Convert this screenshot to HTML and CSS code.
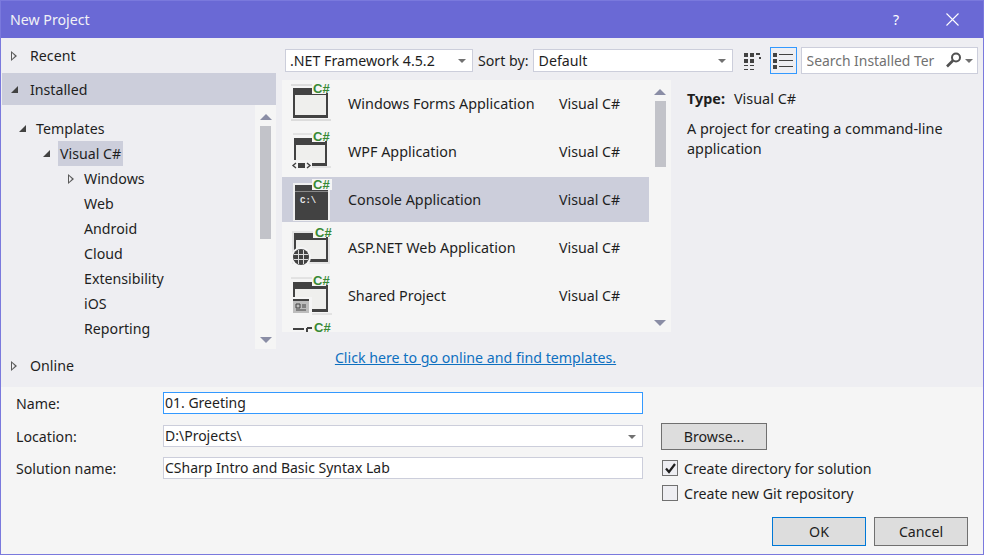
FILE: index.html
```html
<!DOCTYPE html>
<html lang="en">
  <head>
    <meta charset="UTF-8" />
    <title>New Project</title>
    <link rel="stylesheet" href="styles.css">
  </head>
  <body>
    <div class="dialog">
      <div class="titlebar">
        <span class="title">New Project</span>
        <span class="help">?</span>
        <svg class="close" width="13" height="13" viewBox="0 0 13 13"><path d="M0.5 0.5 L12.5 12.5 M12.5 0.5 L0.5 12.5" stroke="#fff" stroke-width="1.1" fill="none"/></svg>
      </div>

      <div class="main">
        <div class="sidebar">
          <div class="top-node node-recent"><span class="arrow-open"></span>Recent</div>
          <div class="top-node node-installed"><span class="arrow-down"></span>Installed</div>
          <div class="tree-wrap">
            <ul class="tree">
              <li class="lvl1"><span class="arrow-down"></span>Templates</li>
              <li class="lvl2"><span class="arrow-down"></span><span class="picked">Visual C#</span></li>
              <li class="lvl3"><span class="arrow-open"></span>Windows</li>
              <li class="lvl3">Web</li>
              <li class="lvl3">Android</li>
              <li class="lvl3">Cloud</li>
              <li class="lvl3">Extensibility</li>
              <li class="lvl3">iOS</li>
              <li class="lvl3">Reporting</li>
            </ul>
            <div class="scrollbar tree-scroll">
              <span class="sb-up"></span>
              <span class="sb-thumb"></span>
              <span class="sb-down"></span>
            </div>
          </div>
          <div class="top-node node-online"><span class="arrow-open"></span>Online</div>
        </div>

        <div class="center">
          <div class="toolbar">
            <div class="combo framework">.NET Framework 4.5.2<span class="caret"></span></div>
            <span class="sort-label">Sort by:</span>
            <div class="combo sort">Default<span class="caret"></span></div>
            <svg class="grid-view" width="18" height="18" viewBox="0 0 18 18" fill="#424242">
              <rect x="0" y="1" width="4" height="4"/><rect x="6" y="1" width="4" height="4"/><rect x="12" y="1" width="4" height="2"/>
              <rect x="0" y="7" width="4" height="4"/><rect x="6" y="7" width="4" height="4"/><rect x="15" y="5" width="2" height="2"/>
              <rect x="0" y="13" width="4" height="1"/><rect x="6" y="13" width="4" height="1"/>
              <rect x="0" y="17" width="4" height="1"/><rect x="6" y="17" width="4" height="1"/>
            </svg>
            <div class="list-view">
              <svg width="20" height="18" viewBox="0 0 20 18" fill="#424242">
                <rect x="0" y="1" width="4" height="4"/><rect x="6" y="2" width="14" height="1"/>
                <rect x="0" y="7" width="4" height="4"/><rect x="6" y="8" width="14" height="1"/>
                <rect x="0" y="13" width="4" height="4"/><rect x="6" y="14" width="14" height="1"/>
              </svg>
            </div>
            <div class="search">
              <span class="search-text">Search Installed Ter</span>
              <svg width="17" height="16" viewBox="0 0 17 16"><circle cx="11" cy="5.5" r="4" fill="none" stroke="#515151" stroke-width="2"/><path d="M8 8.5 L2 14.5" stroke="#515151" stroke-width="2.6"/></svg>
              <span class="caret"></span>
            </div>
          </div>

          <div class="content">
            <div class="list-wrap">
              <div class="list">
                <div class="row">
                  <svg class="tpl" width="44" height="45" viewBox="0 0 44 45">
                    <path d="M3 4 H24 M3 39 H43" stroke="#c4c4c4"/>
                    <rect x="5" y="7" width="35" height="30" fill="#424242"/>
                    <rect x="7" y="14" width="31" height="20" fill="#efefed"/>
                    <rect x="24" y="2" width="20" height="11" fill="#f5f5f5"/>
                    <rect x="38" y="12" width="2" height="3" fill="#424242"/>
                    <text class="cs" x="25" y="12">C#</text>
                  </svg>
                  <span class="row-name">Windows Forms Application</span><span class="row-lang">Visual C#</span>
                </div>
                <div class="row">
                  <svg class="tpl" width="44" height="45" viewBox="0 0 44 45">
                    <path d="M5 5 H24 M24 38 H43" stroke="#d0d0d0"/>
                    <rect x="6" y="9" width="33" height="28" fill="#424242"/>
                    <rect x="8" y="16" width="29" height="18" fill="#efefed"/>
                    <rect x="24" y="2" width="20" height="11" fill="#f5f5f5"/>
                    <rect x="37" y="12" width="2" height="3" fill="#424242"/>
                    <rect x="3" y="31" width="21" height="10" fill="#f5f5f5"/>
                    <path d="M8 34 L5 36.5 L8 39 M19 34 L22 36.5 L19 39" stroke="#424242" stroke-width="1.4" fill="none"/>
                    <rect x="10" y="34" width="7" height="5" fill="#424242"/>
                    <text class="cs" x="25" y="12">C#</text>
                  </svg>
                  <span class="row-name">WPF Application</span><span class="row-lang">Visual C#</span>
                </div>
                <div class="row row-on">
                  <svg class="tpl" width="44" height="45" viewBox="0 0 44 45">
                    <rect x="5" y="6" width="37" height="38" fill="#f0f0f0"/>
                    <rect x="7" y="8" width="33" height="35" fill="#424242"/>
                    <rect x="7" y="14" width="33" height="1" fill="#8a8a8a"/>
                    <rect x="24" y="2" width="20" height="11" fill="#f5f5f5"/>
                    <text class="prompt" x="12" y="26">C:\</text>
                    <text class="cs" x="25" y="12">C#</text>
                  </svg>
                  <span class="row-name">Console Application</span><span class="row-lang">Visual C#</span>
                </div>
                <div class="row">
                  <svg class="tpl" width="44" height="45" viewBox="0 0 44 45">
                    <rect x="4" y="6" width="38" height="33" fill="#e4e4e4"/>
                    <rect x="6" y="8" width="34" height="29" fill="#424242"/>
                    <rect x="8" y="15" width="30" height="19" fill="#efefed"/>
                    <rect x="25" y="2" width="19" height="11" fill="#f5f5f5"/>
                    <rect x="38" y="12" width="2" height="3" fill="#424242"/>
                    <circle cx="13" cy="32" r="10" fill="#f5f5f5"/>
                    <circle cx="13" cy="32" r="8" fill="#424242"/>
                    <path d="M6 29.5 H20 M6 34.5 H20 M10.5 25 V39 M15.5 25 V39" stroke="#dcdcdc"/>
                    <text class="cs" x="27" y="12">C#</text>
                  </svg>
                  <span class="row-name">ASP.NET Web Application</span><span class="row-lang">Visual C#</span>
                </div>
                <div class="row">
                  <svg class="tpl" width="44" height="45" viewBox="0 0 44 45">
                    <path d="M3 5 H24 M24 41 H44" stroke="#d0d0d0"/>
                    <rect x="5" y="9" width="35" height="30" fill="#424242"/>
                    <rect x="7" y="16" width="31" height="20" fill="#efefed"/>
                    <rect x="24" y="2" width="20" height="11" fill="#f5f5f5"/>
                    <rect x="38" y="12" width="2" height="3" fill="#424242"/>
                    <rect x="3" y="24" width="21" height="18" fill="#f5f5f5"/>
                    <rect x="5" y="26" width="16" height="14" fill="#bdbdbd"/>
                    <rect x="5" y="26" width="16" height="2" fill="#424242"/>
                    <path d="M8 31 H12 V35 H8 Z M14 32 H18 M14 34 H18 M8 37 H18" stroke="#424242" fill="none"/>
                    <text class="cs" x="25" y="12">C#</text>
                  </svg>
                  <span class="row-name">Shared Project</span><span class="row-lang">Visual C#</span>
                </div>
                <div class="row">
                  <svg class="tpl" width="44" height="45" viewBox="0 0 44 45">
                    <path d="M19 7 H24 M19 7 V12 M5 8 H16" stroke="#424242" stroke-width="2" fill="none"/>
                    <text class="cs" x="26" y="11">C#</text>
                  </svg>
                </div>
              </div>
              <div class="scrollbar list-scroll">
                <span class="sb-up"></span>
                <span class="sb-thumb"></span>
                <span class="sb-down"></span>
              </div>
            </div>
            <a class="online-link" href="#">Click here to go online and find templates.</a>
          </div>
        </div>

        <div class="details">
          <p class="type"><strong>Type:</strong>Visual C#</p>
          <p class="desc">A project for creating a command-line application</p>
        </div>
      </div>

      <div class="footer">
        <div class="fields">
          <div class="field field-name">
            <label>Name:</label>
            <div class="input input-focus">01. Greeting</div>
          </div>
          <div class="field field-location">
            <label>Location:</label>
            <div class="input">D:\Projects\<span class="caret"></span></div>
          </div>
          <div class="field field-solution">
            <label>Solution name:</label>
            <div class="input">CSharp Intro and Basic Syntax Lab</div>
          </div>
        </div>
        <div class="side-actions">
          <button class="btn btn-browse" type="button">Browse...</button>
          <div class="check check-first">
            <span class="box"><svg width="13" height="13" viewBox="0 0 13 13"><path d="M2 6.5 L5 10 L11 2" stroke="#1e1e1e" stroke-width="2.2" fill="none"/></svg></span>
            Create directory for solution
          </div>
          <div class="check">
            <span class="box"></span>
            Create new Git repository
          </div>
          <div class="buttons">
            <button class="btn btn-ok" type="button">OK</button>
            <button class="btn" type="button">Cancel</button>
          </div>
        </div>
      </div>
    </div>
  </body>
</html>
```

FILE: styles.css
```css
html,
body {
  margin: 0;
  padding: 0;
}

body {
  width: 984px;
  height: 555px;
  overflow: hidden;
  font-family: "Noto Sans", "Open Sans", sans-serif;
  font-size: 14.2px;
  color: #1e1e1e;
}

.dialog {
  box-sizing: border-box;
  width: 984px;
  height: 555px;
  border: 1px solid #7a79dd;
  background-color: #eeeef2;
  display: flex;
  flex-direction: column;
}

.titlebar {
  height: 37px;
  flex: none;
  background-color: #6a69d5;
  color: #fff;
  display: flex;
  align-items: center;
  padding-left: 9px;
  box-sizing: border-box;
}

.title {
  flex: 1;
  color: #f1f1f6;
}

.help {
  margin-right: 47px;
  font-size: 14px;
}

.close {
  margin-right: 24px;
}

.main {
  height: 349px;
  flex: none;
  display: flex;
}

/* left tree */
.sidebar {
  width: 274px;
  margin-left: 1px;
  flex: none;
}

.top-node {
  display: flex;
  align-items: center;
  padding-left: 9px;
  box-sizing: border-box;
}

.top-node > span {
  margin-right: 13px;
}

.node-recent {
  height: 35px;
}

.node-installed {
  height: 32px;
  background-color: #cccedb;
}

.node-installed > span {
  margin-right: 12px;
}

.node-online {
  height: 33px;
}

.tree-wrap {
  height: 244px;
  display: flex;
}

.tree {
  flex: 1;
  list-style: none;
  margin: 0;
  padding: 11px 0 0;
}

.tree li {
  height: 25px;
  line-height: 25px;
  display: flex;
  align-items: center;
}

.lvl1 {
  padding-left: 17px;
}

.lvl1 .arrow-down {
  margin-right: 10px;
}

.lvl2 {
  padding-left: 41px;
}

.lvl2 .arrow-down {
  margin-right: 8px;
}

.picked {
  background-color: #cccedb;
  padding: 0 2px;
  height: 25px;
}

.lvl3 {
  padding-left: 82px;
}

.lvl3 .arrow-open {
  position: absolute;
  margin-left: -16px;
}

.arrow-open {
  display: inline-block;
  width: 0;
  height: 0;
  border-left: 6px solid #5a5a5a;
  border-top: 5px solid transparent;
  border-bottom: 5px solid transparent;
  position: relative;
}

.arrow-open::after {
  content: "";
  position: absolute;
  left: -5px;
  top: -3px;
  border-left: 3px solid #eeeef2;
  border-top: 3px solid transparent;
  border-bottom: 3px solid transparent;
}

.arrow-down {
  display: inline-block;
  width: 0;
  height: 0;
  border-left: 7px solid transparent;
  border-bottom: 7px solid #424242;
}

/* scrollbars */
.scrollbar {
  width: 21px;
  flex: none;
  background-color: #f5f5f5;
  display: flex;
  flex-direction: column;
  align-items: center;
  box-sizing: border-box;
}

.sb-up {
  margin-top: 9px;
  border-left: 6px solid transparent;
  border-right: 6px solid transparent;
  border-bottom: 6px solid #8a8da5;
}

.sb-thumb {
  width: 11px;
  background-color: #c2c3c9;
  margin-top: 6px;
}

.sb-down {
  margin-top: auto;
  margin-bottom: 6px;
  border-left: 6px solid transparent;
  border-right: 6px solid transparent;
  border-top: 6px solid #8a8da5;
}

.tree-scroll .sb-thumb {
  height: 113px;
}

.list-scroll {
  width: 22px;
}

.list-scroll .sb-thumb {
  height: 66px;
}

/* center */
.center {
  width: 390px;
  margin-left: 6px;
  flex: none;
}

.toolbar {
  height: 42px;
  display: flex;
  align-items: center;
  width: 700px;
  padding-top: 3px;
  box-sizing: border-box;
}

.combo {
  box-sizing: border-box;
  height: 23px;
  line-height: 21px;
  border: 1px solid #cccedb;
  background-color: #fff;
  padding-left: 4px;
  position: relative;
}

.framework {
  width: 188px;
  margin-left: 3px;
}

.sort-label {
  margin-left: 5px;
}

.sort {
  width: 200px;
  margin-left: 4px;
  padding-left: 5px;
}

.caret {
  position: absolute;
  right: 6px;
  top: 9px;
  border-left: 4px solid transparent;
  border-right: 4px solid transparent;
  border-top: 4px solid #717171;
}

.grid-view {
  margin-left: 11px;
}

.list-view {
  box-sizing: border-box;
  width: 27px;
  height: 27px;
  border: 1px solid #3399ff;
  margin-left: 8px;
  display: flex;
  align-items: center;
  justify-content: center;
}

.search {
  box-sizing: border-box;
  width: 177px;
  height: 27px;
  margin-left: 4px;
  border: 1px solid #cccedb;
  background-color: #fff;
  position: relative;
  display: flex;
  align-items: center;
  padding-left: 5px;
  padding-bottom: 1px;
}

.search-text {
  color: #717171;
  font-size: 13.9px;
  width: 137px;
  overflow: hidden;
  white-space: nowrap;
}

.search svg {
  margin-left: 1px;
}

.search .caret {
  top: 11px;
  right: 4px;
}

.list-wrap {
  display: flex;
  height: 252px;
  width: 389px;
  background-color: #f5f5f5;
}

.list {
  width: 367px;
  height: 252px;
  overflow: hidden;
  flex: none;
  padding-top: 1px;
  box-sizing: border-box;
}

.row {
  height: 45px;
  margin-bottom: 3px;
  display: flex;
  align-items: center;
}

.row-on {
  background-color: #cccedb;
}

.tpl {
  margin-left: 6px;
  flex: none;
}

.cs {
  font-family: "Liberation Sans", sans-serif;
  font-size: 13px;
  font-weight: bold;
  fill: #388a34;
}

.prompt {
  font-family: "Liberation Mono", monospace;
  font-size: 9px;
  font-weight: bold;
  fill: #e8e8e8;
}

.row-name {
  width: 211px;
  margin-left: 16px;
  font-size: 14.35px;
  white-space: nowrap;
}

.online-link {
  display: block;
  margin-top: 16px;
  text-align: center;
  color: #0e70c0;
  width: 387px;
}

/* right details */
.details {
  margin-left: 15px;
  width: 270px;
  padding-top: 51px;
  font-size: 14.4px;
}

.details p {
  margin: 0;
  line-height: 20px;
}

.details .type {
  margin-bottom: 10px;
}

.type strong {
  margin-right: 9px;
}

/* bottom form */
.footer {
  flex: 1;
  background-color: #f5f5f5;
  display: flex;
}

.fields {
  width: 642px;
  margin-left: 15px;
  padding-top: 5px;
}

.field {
  display: flex;
  align-items: center;
}

.field label {
  width: 147px;
  flex: none;
}

.input {
  box-sizing: border-box;
  position: relative;
  width: 480px;
  height: 22px;
  line-height: 20px;
  font-size: 14px;
  border: 1px solid #cccedb;
  background-color: #fff;
  padding-left: 1px;
}

.input-focus {
  border-color: #3399ff;
}

.field-location {
  margin-top: 11px;
}

.field-solution {
  margin-top: 10px;
}

.side-actions {
  margin-left: 3px;
  padding-top: 36px;
}

.btn {
  box-sizing: border-box;
  width: 94px;
  height: 29px;
  border: 1px solid #707070;
  border-radius: 0;
  background-color: #dddddd;
  font-family: inherit;
  font-size: inherit;
  color: #1e1e1e;
  padding: 0;
}

.btn-browse {
  width: 106px;
  height: 27px;
  display: block;
}

.btn-ok {
  border-color: #0078d7;
}

.check {
  display: flex;
  align-items: center;
  height: 25px;
  margin-left: 1px;
  padding-bottom: 1px;
  box-sizing: border-box;
}

.check-first {
  margin-top: 6px;
}

.box {
  box-sizing: border-box;
  width: 16px;
  height: 16px;
  border: 1px solid #707070;
  background-color: #eeeef2;
  margin-right: 6px;
  display: flex;
  align-items: center;
  justify-content: center;
}

.buttons {
  display: flex;
  gap: 8px;
  margin-left: 111px;
  margin-top: 11px;
}
```
